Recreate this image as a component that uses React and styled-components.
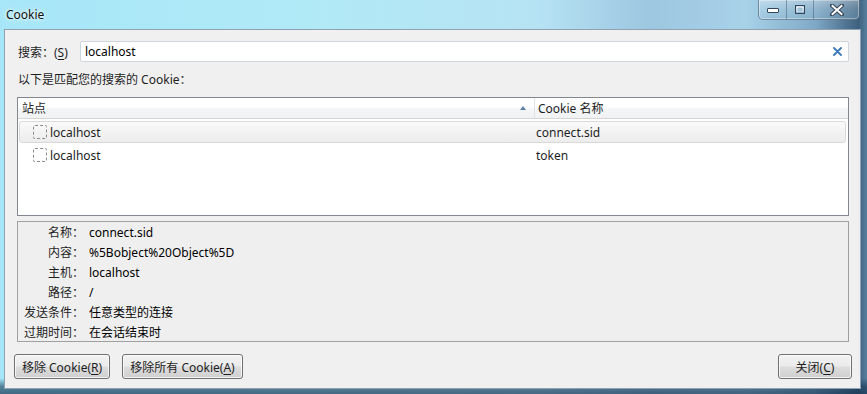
import React from 'react'
import styled, { createGlobalStyle } from 'styled-components'

const Global = createGlobalStyle`
  html, body {
    margin: 0;
    padding: 0;
    background: #6f93b3;
  }
  * {
    box-sizing: border-box;
  }
`

const Window = styled.div`
  width: 867px;
  height: 394px;
  display: flex;
  flex-direction: column;
  overflow: hidden;
  font-family: "Noto Sans", "Noto Sans CJK SC", sans-serif;
  font-size: 12px;
  color: #1e1e1e;
  background:
    linear-gradient(180deg, rgba(255,255,255,0) 0%, rgba(255,255,255,0) 96%, rgba(20,50,80,0.55) 98%, rgba(20,50,80,0.7) 100%),
    linear-gradient(90deg, #a6e6f8 0%, #b1eaf7 35%, #b6e3f4 62%, #9dc6e0 75%, #a8d2e8 86%, #7fa9c6 94%, #3d607e 99%, #58809e 100%);
`

const TitleBar = styled.div`
  height: 29px;
  display: flex;
  align-items: flex-start;
  justify-content: space-between;
  padding-left: 6px;
  padding-right: 7px;
`

const Title = styled.div`
  padding-top: 6px;
  font-size: 12px;
  color: #111;
  text-shadow: 0 0 6px rgba(255,255,255,0.9), 0 0 3px rgba(255,255,255,0.9);
`

const Caption = styled.div`
  display: flex;
  height: 20px;
  border: 1px solid rgba(60,80,100,0.55);
  border-top: none;
  border-radius: 0 0 5px 5px;
  overflow: hidden;
  background: linear-gradient(180deg, rgba(255,255,255,0.35) 0%, rgba(200,225,240,0.25) 50%, rgba(150,190,215,0.3) 100%);
  box-shadow: inset 0 0 0 1px rgba(255,255,255,0.35);
`

const CapButton = styled.div`
  width: ${p => p.$w}px;
  display: flex;
  align-items: center;
  justify-content: center;
  border-left: ${p => (p.$first ? 'none' : '1px solid rgba(60,80,100,0.45)')};
`

const Client = styled.div`
  flex: 1;
  margin: 0 6px 5px 4px;
  background: #f0f0f0;
  border: 1px solid #8ea2b4;
  padding: 11px 11px 9px 12px;
  display: flex;
  flex-direction: column;
`

const SearchRow = styled.div`
  display: flex;
  align-items: center;
  height: 21px;
  padding-left: 1px;
`

const SearchLabel = styled.label`
  width: 62px;
`

const Key = styled.span`
  text-decoration: underline;
  text-underline-offset: 2px;
`

const SearchBox = styled.div`
  flex: 1;
  height: 21px;
  display: flex;
  align-items: center;
  background: #fff;
  border: 1px solid #cfd5dc;
  border-radius: 2px;
  padding: 0 6px 0 4px;
`

const SearchText = styled.span`
  flex: 1;
  color: #000;
`

const Hint = styled.div`
  margin-top: 10px;
  height: 16px;
  line-height: 16px;
  padding-left: 1px;
`

const Tree = styled.div`
  margin-top: 9px;
  height: 119px;
  background: #fff;
  border: 1px solid #828790;
  display: flex;
  flex-direction: column;
`

const HeaderRow = styled.div`
  height: 21px;
  display: grid;
  grid-template-columns: 517px 1fr;
  background: linear-gradient(180deg, #ffffff 0%, #ffffff 45%, #f4f5f7 55%, #f1f2f4 100%);
  border-bottom: 1px solid #d5d5d5;
`

const HeaderCell = styled.div`
  display: flex;
  align-items: center;
  padding-left: ${p => p.$pad}px;
  padding-right: 8px;
  border-right: ${p => (p.$sep ? '1px solid #e2e3e5' : 'none')};
`

const SortArrow = styled.span`
  margin-left: auto;
  width: 0;
  height: 0;
  border-left: 3px solid transparent;
  border-right: 3px solid transparent;
  border-bottom: 4px solid #5d7ea4;
`

const Rows = styled.div`
  padding: 2px 2px 0 1px;
  display: flex;
  flex-direction: column;
  gap: 1px;
`

const Row = styled.div`
  height: 22px;
  display: grid;
  grid-template-columns: 516px 1fr;
  align-items: center;
  border: 1px solid ${p => (p.$hot ? '#d9d9d9' : 'transparent')};
  border-radius: 3px;
  background: ${p => (p.$hot ? 'linear-gradient(180deg, #fafafa 0%, #ececec 100%)' : 'transparent')};
`

const SiteCell = styled.div`
  display: flex;
  align-items: center;
  padding-left: 13px;
  gap: 3px;
`

const Twisty = styled.span`
  width: 14px;
  height: 14px;
  border: 1px dashed #8c8c8c;
  border-radius: 2px;
`

const NameCell = styled.div`
  padding-left: 0;
`

const Details = styled.div`
  margin-top: 5px;
  height: 121px;
  background: #efefef;
  border: 1px solid #a0a0a0;
  display: grid;
  grid-template-columns: 60px 1fr;
  grid-auto-rows: 20px;
  column-gap: 5px;
  padding: 0 0 0 6px;
  align-items: center;
`

const DLabel = styled.div`
  text-align: right;
  white-space: nowrap;
`

const DValue = styled.div`
  color: #000;
`

const ButtonRow = styled.div`
  margin: 12px -3px 0 -3px;
  display: flex;
  gap: 12px;
`

const Button = styled.button`
  height: 25px;
  width: ${p => p.$w}px;
  margin-left: ${p => (p.$push ? 'auto' : '0')};
  font: inherit;
  color: #1e1e1e;
  padding: 0;
  border: 1px solid #707070;
  border-radius: 3px;
  background: linear-gradient(180deg, #f2f2f2 0%, #ebebeb 48%, #dddddd 52%, #cfcfcf 100%);
  box-shadow: inset 0 0 0 1px rgba(255,255,255,0.75);
`

const MinIcon = () => (
  <svg width="14" height="8" viewBox="0 0 14 8">
    <rect x="1.5" y="2.5" width="11" height="4" fill="#fff" stroke="#34465a" strokeWidth="1" rx="0.5" />
  </svg>
)

const MaxIcon = () => (
  <svg width="12" height="11" viewBox="0 0 12 11">
    <rect x="1.5" y="1.5" width="9" height="8" fill="none" stroke="#34465a" strokeWidth="1" />
    <rect x="3" y="3" width="6" height="4" fill="none" stroke="#fff" strokeWidth="1" />
    <rect x="3.5" y="4.5" width="5" height="3" fill="#a6c4da" />
  </svg>
)

const CloseIcon = () => (
  <svg width="14" height="12" viewBox="0 0 14 12">
    <path d="M2 1.5 L12 10.5 M12 1.5 L2 10.5" stroke="#34465a" strokeWidth="4" strokeLinecap="square" />
    <path d="M2.5 2 L11.5 10 M11.5 2 L2.5 10" stroke="#fff" strokeWidth="2" strokeLinecap="square" />
  </svg>
)

const ClearIcon = () => (
  <svg width="9" height="9" viewBox="0 0 9 9">
    <path d="M1 1 L8 8 M8 1 L1 8" stroke="#3a78b8" strokeWidth="1.8" strokeLinecap="round" />
  </svg>
)

const cookies = [
  { site: 'localhost', name: 'connect.sid' },
  { site: 'localhost', name: 'token' }
]

const details = [
  ['名称：', 'connect.sid'],
  ['内容：', '%5Bobject%20Object%5D'],
  ['主机：', 'localhost'],
  ['路径：', '/'],
  ['发送条件：', '任意类型的连接'],
  ['过期时间：', '在会话结束时']
]

const App = () => {
  return (
    <>
      <Global />
      <Window>
        <TitleBar>
          <Title>Cookie</Title>
          <Caption>
            <CapButton $w={27} $first><MinIcon /></CapButton>
            <CapButton $w={27}><MaxIcon /></CapButton>
            <CapButton $w={46}><CloseIcon /></CapButton>
          </Caption>
        </TitleBar>
        <Client>
          <SearchRow>
            <SearchLabel>搜索：(<Key>S</Key>)</SearchLabel>
            <SearchBox>
              <SearchText>localhost</SearchText>
              <ClearIcon />
            </SearchBox>
          </SearchRow>
          <Hint>以下是匹配您的搜索的 Cookie：</Hint>
          <Tree>
            <HeaderRow>
              <HeaderCell $pad={4} $sep>站点<SortArrow /></HeaderCell>
              <HeaderCell $pad={3}>Cookie 名称</HeaderCell>
            </HeaderRow>
            <Rows>
              {cookies.map((c, i) => (
                <Row key={c.name} $hot={i === 0}>
                  <SiteCell><Twisty />{c.site}</SiteCell>
                  <NameCell>{c.name}</NameCell>
                </Row>
              ))}
            </Rows>
          </Tree>
          <Details>
            {details.map(([k, v]) => (
              <React.Fragment key={k}>
                <DLabel>{k}</DLabel>
                <DValue>{v}</DValue>
              </React.Fragment>
            ))}
          </Details>
          <ButtonRow>
            <Button $w={96}>移除 Cookie(<Key>R</Key>)</Button>
            <Button $w={121}>移除所有 Cookie(<Key>A</Key>)</Button>
            <Button $w={74} $push>关闭(<Key>C</Key>)</Button>
          </ButtonRow>
        </Client>
      </Window>
    </>
  )
}

export default App
